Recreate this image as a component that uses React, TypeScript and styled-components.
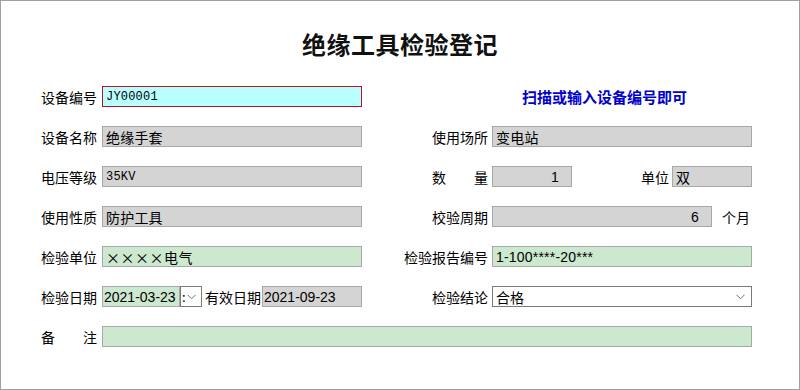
import React from 'react';
import styled, { createGlobalStyle } from 'styled-components';

const GlobalStyle = createGlobalStyle`
  html, body {
    margin: 0;
    padding: 0;
    background: #ffffff;
  }
  body {
    font-family: "Noto Sans CJK SC", "Liberation Sans", sans-serif;
  }
`;

type Tone = 'gray' | 'green' | 'cyan' | 'white';

const fills: Record<Tone, string> = {
  gray: '#d4d4d4',
  green: '#cce8cf',
  cyan: '#b9ffff',
  white: '#ffffff',
};

function Chevron() {
  return (
    <svg width="9" height="6" viewBox="0 0 9 6">
      <polyline points="0.5,0.8 4.5,4.8 8.5,0.8" fill="none" stroke="#6e6e6e" strokeWidth="1" />
    </svg>
  );
}

function Spread(props: { text: string; right?: boolean }) {
  return (
    <SpreadLabel $right={props.right}>
      {props.text.split('').map((c, i) => (
        <span key={i}>{c}</span>
      ))}
    </SpreadLabel>
  );
}

function App() {
  return (
    <>
      <GlobalStyle />
      <Frame>
        <Title>绝缘工具检验登记</Title>
        <Form>
          <Label>设备编号</Label>
          <Field $tone="cyan" $mono $alert readOnly value="JY00001" />
          <span />
          <Hint>扫描或输入设备编号即可</Hint>

          <Label>设备名称</Label>
          <Field $tone="gray" readOnly value="绝缘手套" />
          <Label $right>使用场所</Label>
          <Field $tone="gray" readOnly value="变电站" />

          <Label>电压等级</Label>
          <Field $tone="gray" $mono readOnly value="35KV" />
          <Spread text="数量" right />
          <Cell>
            <Field $tone="gray" $width={80} $alignRight readOnly value="1" />
            <InlineLabel $push>单位</InlineLabel>
            <Field $tone="gray" $width={80} readOnly value="双" />
          </Cell>

          <Label>使用性质</Label>
          <Field $tone="gray" readOnly value="防护工具" />
          <Label $right>校验周期</Label>
          <Cell>
            <Field $tone="gray" $width={220} $alignRight readOnly value="6" />
            <Unit>个月</Unit>
          </Cell>

          <Label>检验单位</Label>
          <Field $tone="green" $wide readOnly value="××××电气" />
          <Label $right>检验报告编号</Label>
          <Field $tone="green" readOnly value="1-100****-20***" />

          <Label>检验日期</Label>
          <Cell>
            <Field $tone="green" $width={78} $tight readOnly value="2021-03-23" />
            <DropButton>
              <span>:</span>
              <Chevron />
            </DropButton>
            <InlineLabel>有效日期</InlineLabel>
            <Field $tone="gray" $width={100} $tight readOnly value="2021-09-23" />
          </Cell>
          <Label $right>检验结论</Label>
          <Select>
            <span>合格</span>
            <Chevron />
          </Select>

          <Spread text="备注" />
          <Cell $span>
            <Field $tone="green" readOnly value="" />
          </Cell>
        </Form>
      </Frame>
    </>
  );
}

export default App;

const Frame = styled.div`
  box-sizing: border-box;
  width: 800px;
  height: 390px;
  border: 1px solid #a0a0a0;
  padding-top: 28px;
  background: #ffffff;
`;

const Title = styled.h1`
  margin: 0;
  height: 30px;
  line-height: 30px;
  text-align: center;
  font-size: 24px;
  font-weight: 700;
  color: #111111;
  letter-spacing: 0.5px;
`;

const Form = styled.div`
  display: grid;
  grid-template-columns: 60px 260px 130px 260px;
  grid-auto-rows: 21px;
  row-gap: 19px;
  margin-top: 27px;
  padding-left: 41px;
`;

const Label = styled.div<{ $right?: boolean }>`
  display: flex;
  align-items: center;
  justify-content: flex-end;
  padding-right: ${(p) => (p.$right ? 4 : 5)}px;
  font-size: 14px;
  color: #000000;
  white-space: nowrap;
`;

const SpreadLabel = styled.div<{ $right?: boolean }>`
  display: flex;
  align-items: center;
  justify-content: space-between;
  justify-self: end;
  width: 56px;
  padding-right: ${(p) => (p.$right ? 4 : 5)}px;
  font-size: 14px;
  color: #000000;
`;

const Cell = styled.div<{ $span?: boolean }>`
  display: flex;
  align-items: stretch;
  grid-column: ${(p) => (p.$span ? '2 / 5' : 'auto')};
`;

const Field = styled.input<{
  $tone: Tone;
  $width?: number;
  $mono?: boolean;
  $wide?: boolean;
  $alert?: boolean;
  $alignRight?: boolean;
  $tight?: boolean;
}>`
  box-sizing: border-box;
  height: 100%;
  width: ${(p) => (p.$width ? `${p.$width}px` : '100%')};
  flex: ${(p) => (p.$width ? `0 0 ${p.$width}px` : '1 1 auto')};
  min-width: 0;
  margin: 0;
  padding: 0 ${(p) => (p.$tight ? 1 : 3)}px;
  border: 1px solid ${(p) => (p.$alert ? '#b3161c' : '#a8a8a8')};
  border-radius: 0;
  background: ${(p) => fills[p.$tone]};
  outline: none;
  font-family: ${(p) =>
    p.$mono
      ? '"Liberation Mono", "Noto Sans CJK SC", monospace'
      : p.$wide
        ? '"Noto Sans CJK SC", sans-serif'
        : '"Liberation Sans", "Noto Sans CJK SC", sans-serif'};
  font-size: ${(p) => (p.$mono ? 12 : 14)}px;
  letter-spacing: ${(p) => (p.$wide ? '0.5px' : p.$tight ? '0' : '0.2px')};
  color: #000000;
  text-align: ${(p) => (p.$alignRight ? 'right' : 'left')};
  padding-right: ${(p) => (p.$alignRight ? 12 : p.$tight ? 0 : 3)}px;
`;

const InlineLabel = styled.span<{ $push?: boolean }>`
  display: flex;
  align-items: center;
  margin-left: ${(p) => (p.$push ? 'auto' : '3px')};
  margin-right: ${(p) => (p.$push ? 3 : 1)}px;
  font-size: 14px;
  color: #000000;
  white-space: nowrap;
`;

const Unit = styled.span`
  display: flex;
  align-items: center;
  margin-left: 10px;
  font-size: 14px;
  color: #000000;
`;

const DropButton = styled.div`
  box-sizing: border-box;
  flex: 0 0 22px;
  display: flex;
  align-items: center;
  gap: 1px;
  padding-left: 1px;
  border: 1px solid #7a7a7a;
  background: #ffffff;
  font-size: 13px;
  color: #000000;

  span {
    line-height: 1;
  }
`;

const Select = styled.div`
  box-sizing: border-box;
  display: flex;
  align-items: center;
  justify-content: space-between;
  padding: 0 6px 0 3px;
  border: 1px solid #7a7a7a;
  background: #ffffff;
  font-size: 14px;
  color: #000000;
`;

const Hint = styled.div`
  display: flex;
  align-items: center;
  padding-left: 30px;
  font-size: 15px;
  font-weight: 700;
  color: #0000cc;
  white-space: nowrap;
`;
